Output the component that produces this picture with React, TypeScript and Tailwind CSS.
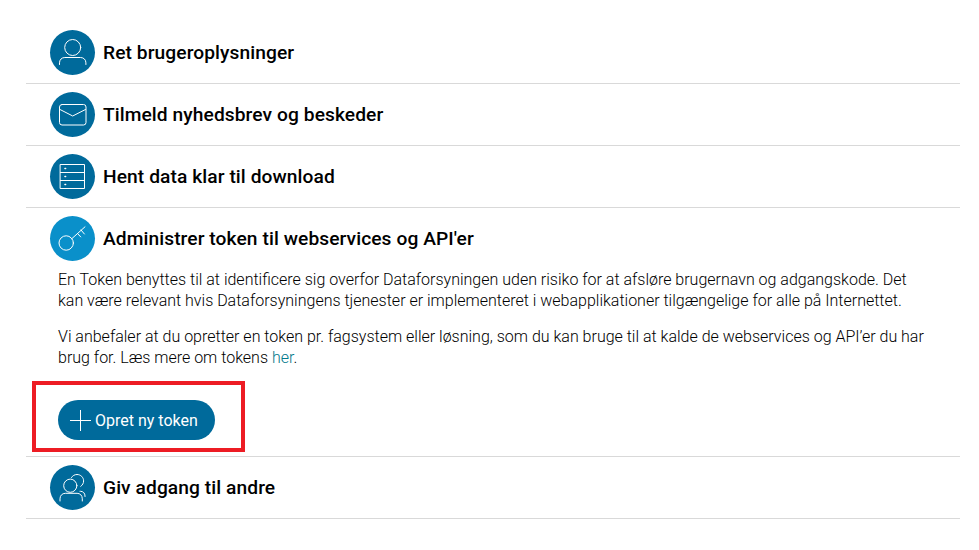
import type { ReactNode } from 'react';

const IconCircle = ({ children, active }: { children: ReactNode; active?: boolean }) => (
  <div className={`flex h-[45px] w-[45px] shrink-0 items-center justify-center rounded-full ${active ? 'bg-[#0a90ca]' : 'bg-[#006a9b]'}`}>
    <svg viewBox="0 0 45 45" className="h-[45px] w-[45px]" fill="none" stroke="white" strokeWidth="1" strokeLinecap="round" strokeLinejoin="round">
      {children}
    </svg>
  </div>
);

const Row = ({ icon, title, active }: { icon: ReactNode; title: string; active?: boolean }) => (
  <div className="flex items-center gap-2 px-6">
    <IconCircle active={active}>{icon}</IconCircle>
    <h2 className="text-[19.2px] font-medium leading-none tracking-[0.08px] text-black">{title}</h2>
  </div>
);

const userIcon = (
  <>
    <circle cx="22.7" cy="17.5" r="8" />
    <path d="M9.5 34.5v-1.7c0-3 2.2-5.3 5.3-5.3h15.8c3.1 0 5.3 2.3 5.3 5.3v1.7" />
  </>
);

const mailIcon = (
  <>
    <rect x="9.5" y="12.5" width="26.5" height="20.5" rx="2.5" />
    <path d="M10 17.5l12.7 6.5 12.8-6.5" />
  </>
);

const dataIcon = (
  <>
    <rect x="10.5" y="10.5" width="24" height="24" />
    <path d="M10.5 18.5h24M10.5 26.5h24" />
    <path d="M15 14.5h.6M15 22.5h.6M15 30.5h.6" strokeWidth="1.6" />
  </>
);

const keyIcon = (
  <>
    <circle cx="16.2" cy="27" r="7.2" />
    <path d="M22 22.5L35 10.8M31 14l3.4 4M27.3 17.3l3.4 3.6" />
  </>
);

const usersIcon = (
  <>
    <circle cx="20.3" cy="20.7" r="6.6" />
    <path d="M10 36v-2.2c0-3.2 2.2-5.5 5.3-5.5h11.8c3.1 0 5.2 2.3 5.2 5.5V36" />
    <path d="M21.5 12.5c1-1.8 3.2-3 5.5-3 3.7 0 6.6 2.9 6.6 6.4 0 2.2-1 4.1-2.8 5.4" />
    <path d="M30 26.3h.5c2.7 0 4.5 2 4.5 4.7v.5" />
  </>
);

export default function App() {
  return (
    <div className="min-h-[550px] bg-white pl-[26px] pt-[22px] font-['Roboto',sans-serif]">
      <div className="w-[934px]">
        <div className="border-b border-[#d9d9d9] pb-2 pt-2">
          <Row icon={userIcon} title="Ret brugeroplysninger" />
        </div>
        <div className="border-b border-[#d9d9d9] py-2">
          <Row icon={mailIcon} title="Tilmeld nyhedsbrev og beskeder" />
        </div>
        <div className="border-b border-[#d9d9d9] py-2">
          <Row icon={dataIcon} title="Hent data klar til download" />
        </div>
        <div className="border-b border-[#d9d9d9] pb-4 pt-2">
          <Row active icon={keyIcon} title="Administrer token til webservices og API'er" />
          <div className="px-8 text-[16px] font-light leading-[21px] text-black">
            <p className="mt-2">
              En Token benyttes til at identificere sig overfor Dataforsyningen uden risiko for at afsløre brugernavn og adgangskode. Det kan være relevant hvis Dataforsyningens tjenester er implementeret i webapplikationer tilgængelige for alle på Internettet.
            </p>
            <p className="mt-[15px]">
              Vi anbefaler at du opretter en token pr. fagsystem eller løsning, som du kan bruge til at kalde de webservices og API’er du har brug for. Læs mere om tokens <a className="text-[#00788a]">her</a>.
            </p>
          </div>
          <div className="relative ml-8 mt-[32px] w-fit">
            <button className="flex h-10 w-[157px] items-center gap-[4px] rounded-[20px] bg-[#006a9b] pl-[12px] text-[16px] font-normal text-white">
              <svg viewBox="0 0 21 21" className="h-[21px] w-[21px]" fill="none" stroke="white" strokeWidth="1">
                <path d="M10.5 0v21M0 10.5h21" />
              </svg>
              <span className="pt-[2px]">Opret ny token</span>
            </button>
            <div className="absolute -left-[26px] -top-[19px] h-[71px] w-[213px] border-4 border-[#ed1c24]" />
          </div>
        </div>
        <div className="border-b border-[#d9d9d9] py-2">
          <Row icon={usersIcon} title="Giv adgang til andre" />
        </div>
      </div>
    </div>
  );
}
